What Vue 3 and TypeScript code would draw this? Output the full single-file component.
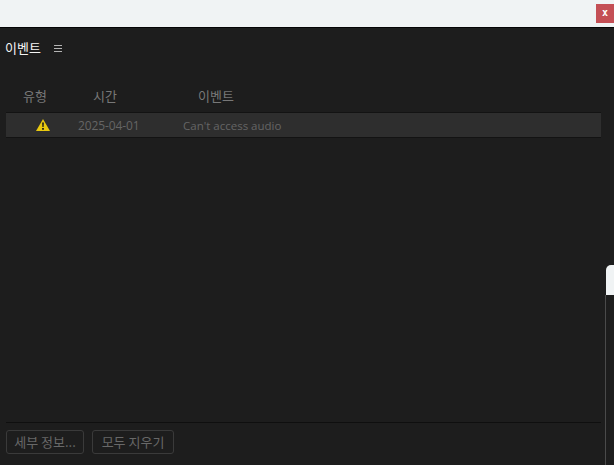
<template>
  <div class="window">
    <div class="topbar">
      <button class="close-btn">x</button>
    </div>
    <div class="panel">
      <div class="panel-head">
        <span class="panel-title">이벤트</span>
        <svg class="menu-icon" width="8" height="7" viewBox="0 0 8 7">
          <path d="M0 .5h8M0 3.5h8M0 6.5h8" stroke="#b4b4b4" stroke-width="1" fill="none" />
        </svg>
      </div>
      <div class="table-head">
        <span class="col-type">유형</span>
        <span class="col-time">시간</span>
        <span class="col-event">이벤트</span>
      </div>
      <div v-for="item in events" :key="item.time" class="table-row">
        <span class="cell-icon">
          <svg width="14" height="12" viewBox="0 0 14 12">
            <path d="M7 0 L14 12 H0 Z" fill="#e8c90f" />
            <path d="M6.1 3.5h1.8l-.3 4.6h-1.2z M6.1 9h1.8v1.7H6.1z" fill="#1c1c1c" />
          </svg>
        </span>
        <span class="cell-time">{{ item.time }}</span>
        <span class="cell-event">{{ item.message }}</span>
      </div>
      <div class="spacer"></div>
      <div class="footer">
        <button class="foot-btn details">세부 정보...</button>
        <button class="foot-btn clear">모두 지우기</button>
      </div>
    </div>
    <div class="edge-tab"></div>
    <div class="edge-line"></div>
  </div>
</template>

<script setup lang="ts">
const events = [{ time: '2025-04-01', message: "Can't access audio" }];
</script>

<style>
html, body {
  margin: 0;
  background: #1d1d1d;
}
</style>

<style scoped>
.window {
  position: relative;
  width: 614px;
  height: 465px;
  overflow: hidden;
  display: flex;
  flex-direction: column;
  background: #1d1d1d;
  font-family: "Noto Sans CJK KR", "Open Sans", sans-serif;
}

.topbar {
  height: 28px;
  flex: none;
  box-sizing: border-box;
  background: #f0f3f4;
  border-bottom: 1px solid #050505;
  display: flex;
  justify-content: flex-end;
  align-items: flex-start;
  padding-top: 4px;
}

.close-btn {
  width: 18px;
  height: 19px;
  padding: 0 0 2px;
  border: 0;
  background: #c44f55;
  color: #fff;
  font: bold 10px "DejaVu Sans Mono", monospace;
}

.panel {
  flex: 1;
  min-height: 0;
  display: flex;
  flex-direction: column;
  padding: 0 13px 11px 6px;
}

.panel-head {
  height: 40px;
  flex: none;
  display: flex;
  align-items: center;
  gap: 13px;
  margin-left: -1px;
}

.panel-title {
  color: #f4f4f4;
  font-size: 13px;
  line-height: 16px;
}

.menu-icon {
  margin-top: 1px;
}

.table-head {
  flex: none;
  height: 18px;
  margin-top: 19px;
  margin-bottom: 7px;
  display: flex;
  align-items: center;
  color: #787878;
  font-size: 13px;
  line-height: 16px;
}

.col-type {
  margin-left: 17px;
  width: 70px;
}

.col-time {
  width: 105px;
}

.table-row {
  flex: none;
  height: 26px;
  box-sizing: border-box;
  display: flex;
  align-items: center;
  background: #2e2e2e;
  border-top: 1px solid #131313;
  border-bottom: 1px solid #131313;
  font-size: 12px;
  color: #656565;
  font-family: "Open Sans", sans-serif;
}

.cell-icon {
  width: 72px;
  padding-left: 30px;
  box-sizing: border-box;
  display: flex;
}

.cell-time {
  width: 105px;
  letter-spacing: -0.1px;
}

.cell-event {
  font-size: 11.5px;
}

.spacer {
  flex: 1;
}

.footer {
  flex: none;
  height: 32px;
  box-sizing: border-box;
  border-top: 1px solid #0f0f0f;
  padding-top: 7px;
  display: flex;
  gap: 8px;
}

.foot-btn {
  height: 24px;
  padding: 0;
  box-sizing: border-box;
  border: 1px solid #3a3a3a;
  border-radius: 3px;
  background: transparent;
  color: #686868;
  font-family: "Noto Sans CJK KR", sans-serif;
  font-size: 13px;
  line-height: 16px;
}

.details {
  width: 78px;
}

.clear {
  width: 82px;
}

.edge-tab {
  position: absolute;
  left: 606px;
  top: 265px;
  width: 8px;
  height: 30px;
  background: #f0f3f4;
  border-top-left-radius: 5px;
}

.edge-line {
  position: absolute;
  left: 605px;
  top: 295px;
  bottom: 0;
  width: 1px;
  background: #4a4a4a;
}
</style>
